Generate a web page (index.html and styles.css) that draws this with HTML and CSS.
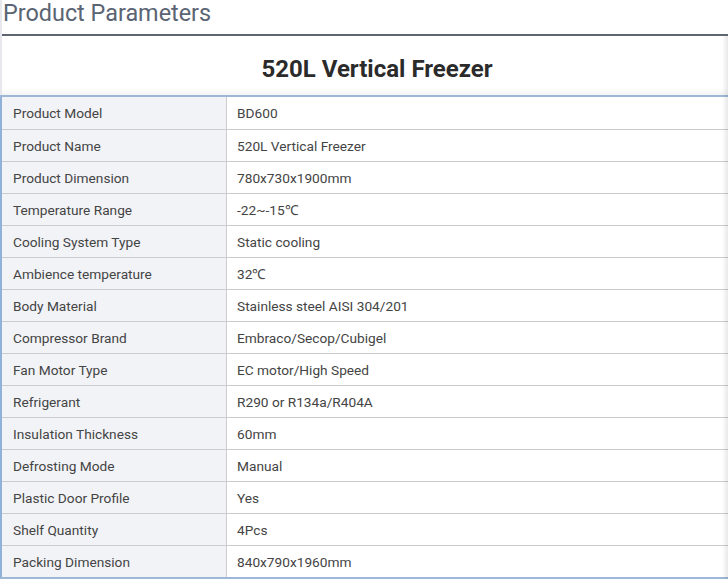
FILE: index.html
```html
<!DOCTYPE html>
<html>
<head>
<meta charset="utf-8">
<link rel="stylesheet" href="styles.css">
</head>
<body>
<div class="page">
  <div class="top">
    <h2 class="heading">Product Parameters</h2>
    <div class="title-box"><h1 class="title">520L Vertical Freezer</h1></div>
  </div>
  <table class="params">
    <tbody>
      <tr><td class="k">Product Model</td><td class="v">BD600</td></tr>
      <tr><td class="k">Product Name</td><td class="v">520L Vertical Freezer</td></tr>
      <tr><td class="k">Product Dimension</td><td class="v">780x730x1900mm</td></tr>
      <tr><td class="k">Temperature Range</td><td class="v">-22~-15℃</td></tr>
      <tr><td class="k">Cooling System Type</td><td class="v">Static cooling</td></tr>
      <tr><td class="k">Ambience temperature</td><td class="v">32℃</td></tr>
      <tr><td class="k">Body Material</td><td class="v">Stainless steel AISI 304/201</td></tr>
      <tr><td class="k">Compressor Brand</td><td class="v">Embraco/Secop/Cubigel</td></tr>
      <tr><td class="k">Fan Motor Type</td><td class="v">EC motor/High Speed</td></tr>
      <tr><td class="k">Refrigerant</td><td class="v">R290 or R134a/R404A</td></tr>
      <tr><td class="k">Insulation Thickness</td><td class="v">60mm</td></tr>
      <tr><td class="k">Defrosting Mode</td><td class="v">Manual</td></tr>
      <tr><td class="k">Plastic Door Profile</td><td class="v">Yes</td></tr>
      <tr><td class="k">Shelf Quantity</td><td class="v">4Pcs</td></tr>
      <tr><td class="k">Packing Dimension</td><td class="v">840x790x1960mm</td></tr>
    </tbody>
  </table>
</div>
</body>
</html>
```
FILE: styles.css
```css
html, body {
  margin: 0;
  padding: 0;
  background: #ffffff;
}
body {
  font-family: Roboto, "Liberation Sans", Arial, sans-serif;
  width: 728px;
  height: 579px;
  overflow: hidden;
}
.page {
  position: relative;
  width: 728px;
}
.page::after {
  content: "";
  position: absolute;
  right: 0;
  top: 36px;
  bottom: 0;
  width: 6px;
  background: linear-gradient(to right, rgba(0,0,0,0), rgba(0,0,0,0.09));
  pointer-events: none;
}
.top {
  border-left: 2px solid #e7e8ee;
}
.heading {
  margin: 0;
  padding-left: 1px;
  font-size: 23.4px;
  line-height: 26px;
  font-weight: 400;
  color: #5a6473;
  border-bottom: 2px solid #5f6670;
  box-sizing: border-box;
  height: 36px;
}
.title-box {
  height: 59px;
  display: flex;
  align-items: center;
  justify-content: center;
  padding-left: 24px;
  box-shadow: inset 0 -7px 7px -5px rgba(0,0,0,0.07);
}
.title {
  margin: 0;
  font-size: 24px;
  font-weight: 700;
  color: #2b2b2b;
  line-height: 28px;
  padding-top: 7px;
}
.params {
  border-collapse: collapse;
  width: 728px;
  border-top: 2px solid #9cb8d6;
  border-left: 2px solid #91b2d8;
  border-bottom: 2px solid #9cb8d6;
  font-size: 13.7px;
  color: #444444;
}
.params td {
  height: 31px;
  padding: 0;
  border-top: 1px solid #cccccc;
  vertical-align: middle;
}
.params tr:first-child td {
  border-top: none;
  height: 32px;
}
.params .k {
  width: 213px;
  padding-left: 11px;
  background: #f2f3f7;
  border-right: 1px solid #cccccc;
}
.params .v {
  padding-left: 10px;
  background: #ffffff;
}
```
